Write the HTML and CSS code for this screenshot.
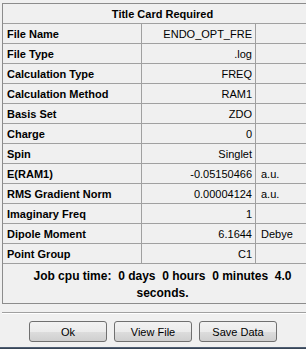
FILE: index.html
```html
<!DOCTYPE html>
<html>
<head>
<meta charset="utf-8">
<link rel="stylesheet" href="styles.css">
</head>
<body>
<div class="win">
  <div class="card">
    <div class="title">Title Card Required</div>
    <div class="lbl">File Name</div><div class="val">ENDO_OPT_FRE</div><div class="unit"></div>
    <div class="lbl">File Type</div><div class="val">.log</div><div class="unit"></div>
    <div class="lbl">Calculation Type</div><div class="val">FREQ</div><div class="unit"></div>
    <div class="lbl">Calculation Method</div><div class="val">RAM1</div><div class="unit"></div>
    <div class="lbl">Basis Set</div><div class="val">ZDO</div><div class="unit"></div>
    <div class="lbl">Charge</div><div class="val">0</div><div class="unit"></div>
    <div class="lbl">Spin</div><div class="val">Singlet</div><div class="unit"></div>
    <div class="lbl">E(RAM1)</div><div class="val">-0.05150466</div><div class="unit">a.u.</div>
    <div class="lbl">RMS Gradient Norm</div><div class="val">0.00004124</div><div class="unit">a.u.</div>
    <div class="lbl">Imaginary Freq</div><div class="val">1</div><div class="unit"></div>
    <div class="lbl">Dipole Moment</div><div class="val">6.1644</div><div class="unit">Debye</div>
    <div class="lbl">Point Group</div><div class="val">C1</div><div class="unit"></div>
    <div class="job">Job cpu time:&nbsp; 0 days&nbsp; 0 hours&nbsp; 0 minutes&nbsp; 4.0<br>seconds.</div>
  </div>
  <div class="sep"></div>
  <div class="buttons">
    <button class="btn">Ok</button>
    <button class="btn">View File</button>
    <button class="btn">Save Data</button>
  </div>
  <div class="edge"></div>
</div>
</body>
</html>
```
FILE: styles.css
```css
html, body {
  margin: 0;
  padding: 0;
  background: #f0f0f0;
  overflow: hidden;
}
body {
  width: 306px;
  height: 349px;
  font-family: "Liberation Sans", Arial, sans-serif;
  font-size: 11px;
  color: #000;
}
.win {
  position: relative;
  width: 306px;
  height: 349px;
  overflow: hidden;
}
.card {
  margin: 3px 0 0 2px;
  width: 321px;
  display: grid;
  grid-template-columns: 138px 113px 1fr;
  grid-auto-rows: 19px;
  gap: 1px;
  background: #a0a0a0;
  border: 1px solid #8c8c8c;
  box-sizing: border-box;
}
.card > div {
  background: #f0f0f0;
  display: flex;
  align-items: center;
  white-space: nowrap;
}
.title {
  grid-column: 1 / 4;
  justify-content: center;
  font-weight: bold;
}
.lbl {
  font-weight: bold;
  padding-left: 4px;
}
.val {
  justify-content: flex-end;
  padding-right: 3px;
}
.unit {
  padding-left: 5px;
}
.card > .job {
  grid-column: 1 / 4;
  grid-row: span 2;
  height: 39px;
  display: block;
  text-align: center;
  font-weight: bold;
  font-size: 12px;
  line-height: 17px;
  padding-top: 4px;
  box-sizing: border-box;
  white-space: normal;
}
.sep {
  margin: 8px 0 0 2px;
  height: 1px;
  background: #a0a0a0;
  border-bottom: 1px solid #ffffff;
}
.buttons {
  display: flex;
  gap: 7px;
  margin: 7px 0 0 29px;
}
.btn {
  width: 78px;
  height: 21px;
  box-sizing: border-box;
  border: 1px solid #707070;
  border-radius: 3px;
  background: linear-gradient(#f2f2f2 0%, #ebebeb 50%, #dddddd 51%, #cfcfcf 100%);
  font-family: "Liberation Sans", Arial, sans-serif;
  font-size: 11px;
  color: #000;
  padding: 0;
}
.edge {
  position: absolute;
  left: 0;
  right: 0;
  bottom: 0;
  height: 2px;
  background: linear-gradient(#5a6a80, #2c3848);
}
```
